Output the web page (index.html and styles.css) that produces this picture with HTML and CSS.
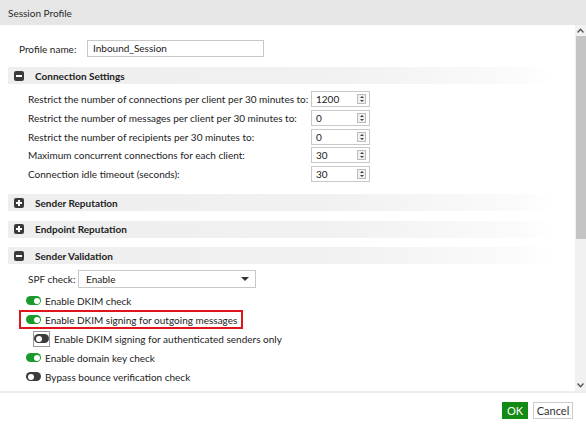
FILE: index.html
```html
<!DOCTYPE html>
<html>
<head>
<meta charset="utf-8">
<link rel="stylesheet" href="styles.css">
</head>
<body>
<div class="dialog">
  <div class="titlebar">Session Profile</div>
  <div class="middle">
    <div class="content">
      <div class="profile-row">
        <span class="profile-label">Profile name:</span>
        <div class="text-input">Inbound_Session</div>
      </div>

      <div class="section-head"><span class="sq-icon minus"></span>Connection Settings</div>
      <div class="num-rows">
        <span class="lbl">Restrict the number of connections per client per 30 minutes to:</span>
        <div class="spin"><span>1200</span><i class="arrows"></i></div>
        <span class="lbl">Restrict the number of messages per client per 30 minutes to:</span>
        <div class="spin"><span>0</span><i class="arrows"></i></div>
        <span class="lbl">Restrict the number of recipients per 30 minutes to:</span>
        <div class="spin"><span>0</span><i class="arrows"></i></div>
        <span class="lbl">Maximum concurrent connections for each client:</span>
        <div class="spin"><span>30</span><i class="arrows"></i></div>
        <span class="lbl">Connection idle timeout (seconds):</span>
        <div class="spin"><span>30</span><i class="arrows"></i></div>
      </div>

      <div class="section-head"><span class="sq-icon plus"></span>Sender Reputation</div>
      <div class="section-head"><span class="sq-icon plus"></span>Endpoint Reputation</div>
      <div class="section-head"><span class="sq-icon minus"></span>Sender Validation</div>

      <div class="spf-row">
        <span class="lbl">SPF check:</span>
        <div class="select"><span>Enable</span><i class="caret"></i></div>
      </div>

      <div class="toggles">
        <div class="trow"><span class="tog on"></span>Enable DKIM check</div>
        <div class="trow hl"><span class="tog on"></span>Enable DKIM signing for outgoing messages</div>
        <div class="trow sub"><span class="tog-box"><span class="tog off"></span></span>Enable DKIM signing for authenticated senders only</div>
        <div class="trow"><span class="tog on"></span>Enable domain key check</div>
        <div class="trow"><span class="tog off"></span>Bypass bounce verification check</div>
        <div class="trow"><span class="tog off"></span>Validate sender address</div>
      </div>
    </div>
    <div class="scrollbar">
      <div class="sb-btn up"><svg width="7" height="5" viewBox="0 0 7 5"><path d="M0.5 4.5 L3.5 1.2 L6.5 4.5" fill="none" stroke="#555" stroke-width="1.4"/></svg></div>
      <div class="sb-track"><div class="sb-thumb"></div></div>
      <div class="sb-btn down"><svg width="7" height="5" viewBox="0 0 7 5"><path d="M0.5 0.5 L3.5 3.8 L6.5 0.5" fill="none" stroke="#555" stroke-width="1.4"/></svg></div>
    </div>
  </div>
  <div class="footer">
    <button class="btn ok">OK</button>
    <button class="btn cancel">Cancel</button>
  </div>
</div>
</body>
</html>
```

FILE: styles.css
```css
* { box-sizing: border-box; }
html, body { margin: 0; padding: 0; background: #fff; }
body {
  font-family: Lato, "Open Sans", "Liberation Sans", sans-serif;
  font-size: 10px;
  color: #222;
}
.dialog {
  width: 586px;
  height: 426px;
  display: flex;
  flex-direction: column;
  overflow: hidden;
}
.titlebar {
  height: 25px;
  flex: none;
  background: #e6e6e6;
  padding-left: 8px;
  display: flex;
  align-items: center;
  color: #2a2a2a;
}
.middle {
  flex: 1;
  display: flex;
  min-height: 0;
  border-bottom: 2px solid #ededed;
}
.content {
  flex: 1;
  overflow: hidden;
  padding: 14px 25px 0 8px;
}
.profile-row {
  display: flex;
  align-items: center;
  padding-left: 11px;
  height: 19px;
}
.profile-label { width: 68px; white-space: nowrap; }
.text-input {
  width: 177px;
  height: 17px;
  border: 1px solid #c8c8c8;
  padding-left: 5px;
  line-height: 15px;
}
.section-head {
  height: 17px;
  margin-top: 9px;
  background: linear-gradient(to right, #eeeeee 0%, #f1f1f1 60%, #fbfbfb 95%, #fff 100%);
  display: flex;
  align-items: center;
  font-weight: bold;
  padding-left: 6px;
  color: #222;
}
.section-head + .section-head { margin-top: 9.5px; }
.sq-icon {
  width: 10px;
  height: 10px;
  background: #3a3a3a;
  border-radius: 2px;
  margin-right: 11px;
  position: relative;
  flex: none;
}
.sq-icon::before {
  content: "";
  position: absolute;
  left: 2px; top: 4px;
  width: 6px; height: 2px;
  background: #fff;
}
.sq-icon.plus::after {
  content: "";
  position: absolute;
  left: 4px; top: 2px;
  width: 2px; height: 6px;
  background: #fff;
}
.num-rows {
  display: grid;
  grid-template-columns: 283px 59px;
  row-gap: 2.8px;
  padding-left: 20px;
  margin-top: 7px;
  align-items: center;
  white-space: nowrap;
}
.spin {
  height: 16px;
  border: 1px solid #c8c8c8;
  display: flex;
  align-items: center;
  justify-content: space-between;
  padding: 0 3px 0 4px;
}
.arrows {
  width: 9px;
  height: 10px;
  border: 1px solid #bdbdbd;
  background: #f0f0f0;
  position: relative;
}
.arrows::before {
  content: "";
  position: absolute;
  left: 2px; top: 1px;
  border-left: 2px solid transparent;
  border-right: 2px solid transparent;
  border-bottom: 2px solid #444;
}
.arrows::after {
  content: "";
  position: absolute;
  left: 2px; top: 5px;
  border-left: 2px solid transparent;
  border-right: 2px solid transparent;
  border-top: 2px solid #444;
}
.num-rows + .section-head { margin-top: 12px; }
.spf-row {
  display: flex;
  align-items: center;
  padding-left: 20px;
  margin-top: 6px;
  height: 18px;
}
.spf-row .lbl { width: 50px; white-space: nowrap; }
.select {
  width: 178px;
  height: 18px;
  border: 1px solid #c8c8c8;
  display: flex;
  align-items: center;
  justify-content: space-between;
  padding: 0 6px 0 7px;
}
.caret {
  border-left: 4px solid transparent;
  border-right: 4px solid transparent;
  border-top: 4px solid #333;
}
.toggles {
  margin-top: 3px;
  padding-left: 11px;
}
.trow {
  display: flex;
  align-items: center;
  height: 19px;
  width: fit-content;
  padding: 0 6px 0 7px;
  white-space: nowrap;
}
.trow.hl {
  border: 2px solid #e0141c;
  padding: 0 4px 0 5px;
  height: 19px;
}
.trow.sub { padding-left: 14px; height: 19px; }
.tog {
  width: 15px;
  height: 9px;
  border-radius: 5px;
  margin-right: 4px;
  position: relative;
  flex: none;
}
.tog::after {
  content: "";
  position: absolute;
  top: 1.5px;
  width: 6px; height: 6px;
  border-radius: 50%;
  background: #fff;
}
.tog.on { background: #1a9a2a; }
.tog.on::after { right: 1.5px; }
.tog.off { background: #3c3c3c; }
.tog.off::after { left: 1.5px; }
.tog-box {
  display: flex;
  align-items: center;
  justify-content: center;
  width: 17px;
  height: 16px;
  border: 1px solid #999;
  margin-right: 4px;
}
.tog-box .tog { margin-right: 0; }
.scrollbar {
  width: 11px;
  flex: none;
  display: flex;
  flex-direction: column;
  background: #f1f1f1;
}
.sb-btn {
  height: 11px;
  display: flex;
  align-items: center;
  justify-content: center;
  flex: none;
}
.sb-track { flex: 1; padding: 0 0 0 1px; }
.sb-thumb { height: 203px; background: #c4c4c4; }
.footer {
  height: 33px;
  flex: none;
  display: flex;
  justify-content: flex-end;
  align-items: center;
  gap: 5px;
  padding-right: 13px;
  padding-top: 1px;
}
.btn {
  font-family: inherit;
  font-size: 11px;
  height: 17px;
  padding: 0;
  border: 1px solid #ccc;
  background: #fff;
  color: #333;
  line-height: 15px;
  border-radius: 0;
}
.btn.ok {
  background: #138a13;
  border-color: #138a13;
  color: #fff;
  width: 26px;
}
.btn.cancel { width: 40px; }
```
